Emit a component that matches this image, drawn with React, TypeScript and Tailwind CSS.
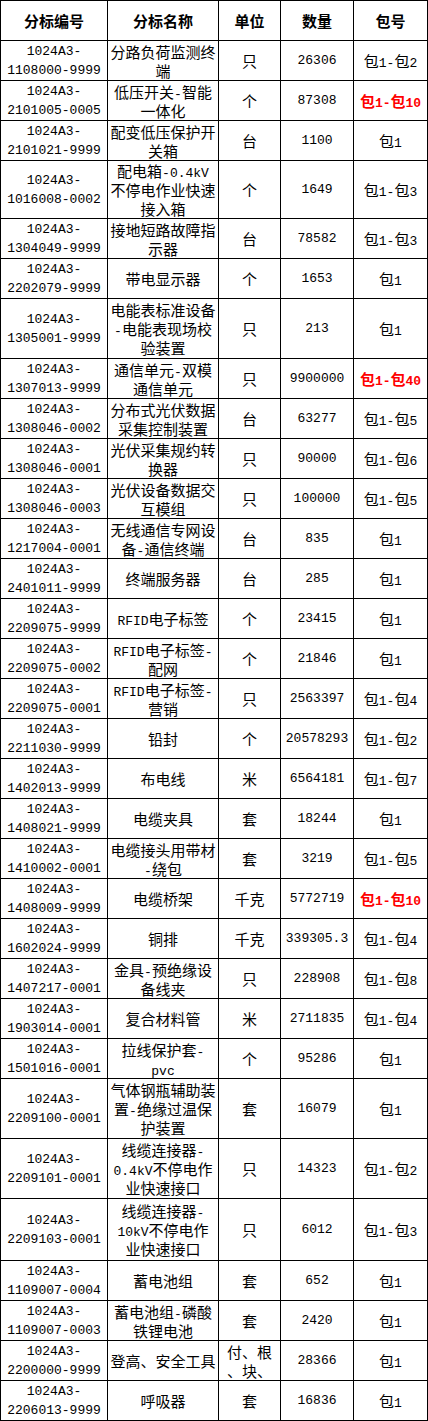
const cols = "grid grid-cols-[107px_111px_62px_73px_74px]";

type Row = {
  code: string;
  name: string[];
  unit: string[];
  qty: string;
  pkg: string;
  hot?: boolean;
  h: string;
};

const rows: Row[] = [
  { code: "1108000-9999", name: ["分路负荷监测终", "端"], unit: ["只"], qty: "26306", pkg: "包1-包2", h: "h-[40px]" },
  { code: "2101005-0005", name: ["低压开关-智能", "一体化"], unit: ["个"], qty: "87308", pkg: "包1-包10", hot: true, h: "h-[40px]" },
  { code: "2101021-9999", name: ["配变低压保护开", "关箱"], unit: ["台"], qty: "1100", pkg: "包1", h: "h-[40px]" },
  { code: "1016008-0002", name: ["配电箱-0.4kV", "不停电作业快速", "接入箱"], unit: ["个"], qty: "1649", pkg: "包1-包3", h: "h-[58px]" },
  { code: "1304049-9999", name: ["接地短路故障指", "示器"], unit: ["台"], qty: "78582", pkg: "包1-包3", h: "h-[40px]" },
  { code: "2202079-9999", name: ["带电显示器"], unit: ["个"], qty: "1653", pkg: "包1", h: "h-[40px]" },
  { code: "1305001-9999", name: ["电能表标准设备", "-电能表现场校", "验装置"], unit: ["只"], qty: "213", pkg: "包1", h: "h-[60px]" },
  { code: "1307013-9999", name: ["通信单元-双模", "通信单元"], unit: ["只"], qty: "9900000", pkg: "包1-包40", hot: true, h: "h-[40px]" },
  { code: "1308046-0002", name: ["分布式光伏数据", "采集控制装置"], unit: ["台"], qty: "63277", pkg: "包1-包5", h: "h-[40px]" },
  { code: "1308046-0001", name: ["光伏采集规约转", "换器"], unit: ["只"], qty: "90000", pkg: "包1-包6", h: "h-[40px]" },
  { code: "1308046-0003", name: ["光伏设备数据交", "互模组"], unit: ["只"], qty: "100000", pkg: "包1-包5", h: "h-[40px]" },
  { code: "1217004-0001", name: ["无线通信专网设", "备-通信终端"], unit: ["台"], qty: "835", pkg: "包1", h: "h-[40px]" },
  { code: "2401011-9999", name: ["终端服务器"], unit: ["台"], qty: "285", pkg: "包1", h: "h-[40px]" },
  { code: "2209075-9999", name: ["RFID电子标签"], unit: ["个"], qty: "23415", pkg: "包1", h: "h-[40px]" },
  { code: "2209075-0002", name: ["RFID电子标签-", "配网"], unit: ["个"], qty: "21846", pkg: "包1", h: "h-[40px]" },
  { code: "2209075-0001", name: ["RFID电子标签-", "营销"], unit: ["只"], qty: "2563397", pkg: "包1-包4", h: "h-[40px]" },
  { code: "2211030-9999", name: ["铅封"], unit: ["个"], qty: "20578293", pkg: "包1-包2", h: "h-[40px]" },
  { code: "1402013-9999", name: ["布电线"], unit: ["米"], qty: "6564181", pkg: "包1-包7", h: "h-[40px]" },
  { code: "1408021-9999", name: ["电缆夹具"], unit: ["套"], qty: "18244", pkg: "包1", h: "h-[40px]" },
  { code: "1410002-0001", name: ["电缆接头用带材", "-绕包"], unit: ["套"], qty: "3219", pkg: "包1-包5", h: "h-[40px]" },
  { code: "1408009-9999", name: ["电缆桥架"], unit: ["千克"], qty: "5772719", pkg: "包1-包10", hot: true, h: "h-[40px]" },
  { code: "1602024-9999", name: ["铜排"], unit: ["千克"], qty: "339305.3", pkg: "包1-包4", h: "h-[40px]" },
  { code: "1407217-0001", name: ["金具-预绝缘设", "备线夹"], unit: ["只"], qty: "228908", pkg: "包1-包8", h: "h-[40px]" },
  { code: "1903014-0001", name: ["复合材料管"], unit: ["米"], qty: "2711835", pkg: "包1-包4", h: "h-[40px]" },
  { code: "1501016-0001", name: ["拉线保护套-", "pvc"], unit: ["个"], qty: "95286", pkg: "包1", h: "h-[40px]" },
  { code: "2209100-0001", name: ["气体钢瓶辅助装", "置-绝缘过温保", "护装置"], unit: ["套"], qty: "16079", pkg: "包1", h: "h-[60px]" },
  { code: "2209101-0001", name: ["线缆连接器-", "0.4kV不停电作", "业快速接口"], unit: ["只"], qty: "14323", pkg: "包1-包2", h: "h-[60px]" },
  { code: "2209103-0001", name: ["线缆连接器-", "10kV不停电作", "业快速接口"], unit: ["只"], qty: "6012", pkg: "包1-包3", h: "h-[62px]" },
  { code: "1109007-0004", name: ["蓄电池组"], unit: ["套"], qty: "652", pkg: "包1", h: "h-[40px]" },
  { code: "1109007-0003", name: ["蓄电池组-磷酸", "铁锂电池"], unit: ["套"], qty: "2420", pkg: "包1", h: "h-[40px]" },
  { code: "2200000-9999", name: ["登高、安全工具"], unit: ["付、根", "、块、"], qty: "28366", pkg: "包1", h: "h-[40px]" },
  { code: "2206013-9999", name: ["呼吸器"], unit: ["套"], qty: "16836", pkg: "包1", h: "h-[40px]" },
];

// latin runs get the narrow mono face, like the half-width glyphs in the original
const Mixed = ({ text, bold }: { text: string; bold?: boolean }) => (
  <>
    {text.split(/([\x00-\x7F]+)/).map((part, i) =>
      /^[\x00-\x7F]+$/.test(part) ? (
        <span key={i} className={`font-['Liberation_Mono',monospace] text-[13px] leading-none ${bold ? "font-bold" : ""}`}>
          {part}
        </span>
      ) : (
        part
      )
    )}
  </>
);

const cell = "flex flex-col items-center justify-center border-r border-b border-black text-center leading-[19px]";

const App = () => {
  return (
    <div className="min-h-[1421px] w-[428px] bg-white font-['Noto_Sans_CJK_SC',sans-serif] text-[15px] text-black">
      <div className="border-l border-t border-black">
        <div className={`${cols} h-[40px] font-bold`}>
          <div className={cell}>分标编号</div>
          <div className={cell}>分标名称</div>
          <div className={cell}>单位</div>
          <div className={cell}>数量</div>
          <div className={cell}>包号</div>
        </div>

        {rows.map((r) => (
          <div key={r.code} className={`${cols} ${r.h}`}>
            <div className={`${cell} font-['Liberation_Mono',monospace] text-[13px]`}>
              <span>1024A3-</span>
              <span>{r.code}</span>
            </div>
            <div className={cell}>
              {r.name.map((line) => (
                <span key={line} className="whitespace-nowrap">
                  <Mixed text={line} />
                </span>
              ))}
            </div>
            <div className={cell}>
              {r.unit.map((line) => (
                <span key={line} className="whitespace-nowrap">
                  {line}
                </span>
              ))}
            </div>
            <div className={`${cell} font-['Liberation_Mono',monospace] text-[13px]`}>{r.qty}</div>
            <div className={`${cell} whitespace-nowrap ${r.hot ? "font-bold text-[#ff0000]" : ""}`}>
              <span>
                <Mixed text={r.pkg} bold={r.hot} />
              </span>
            </div>
          </div>
        ))}
      </div>
    </div>
  );
};

export default App;
